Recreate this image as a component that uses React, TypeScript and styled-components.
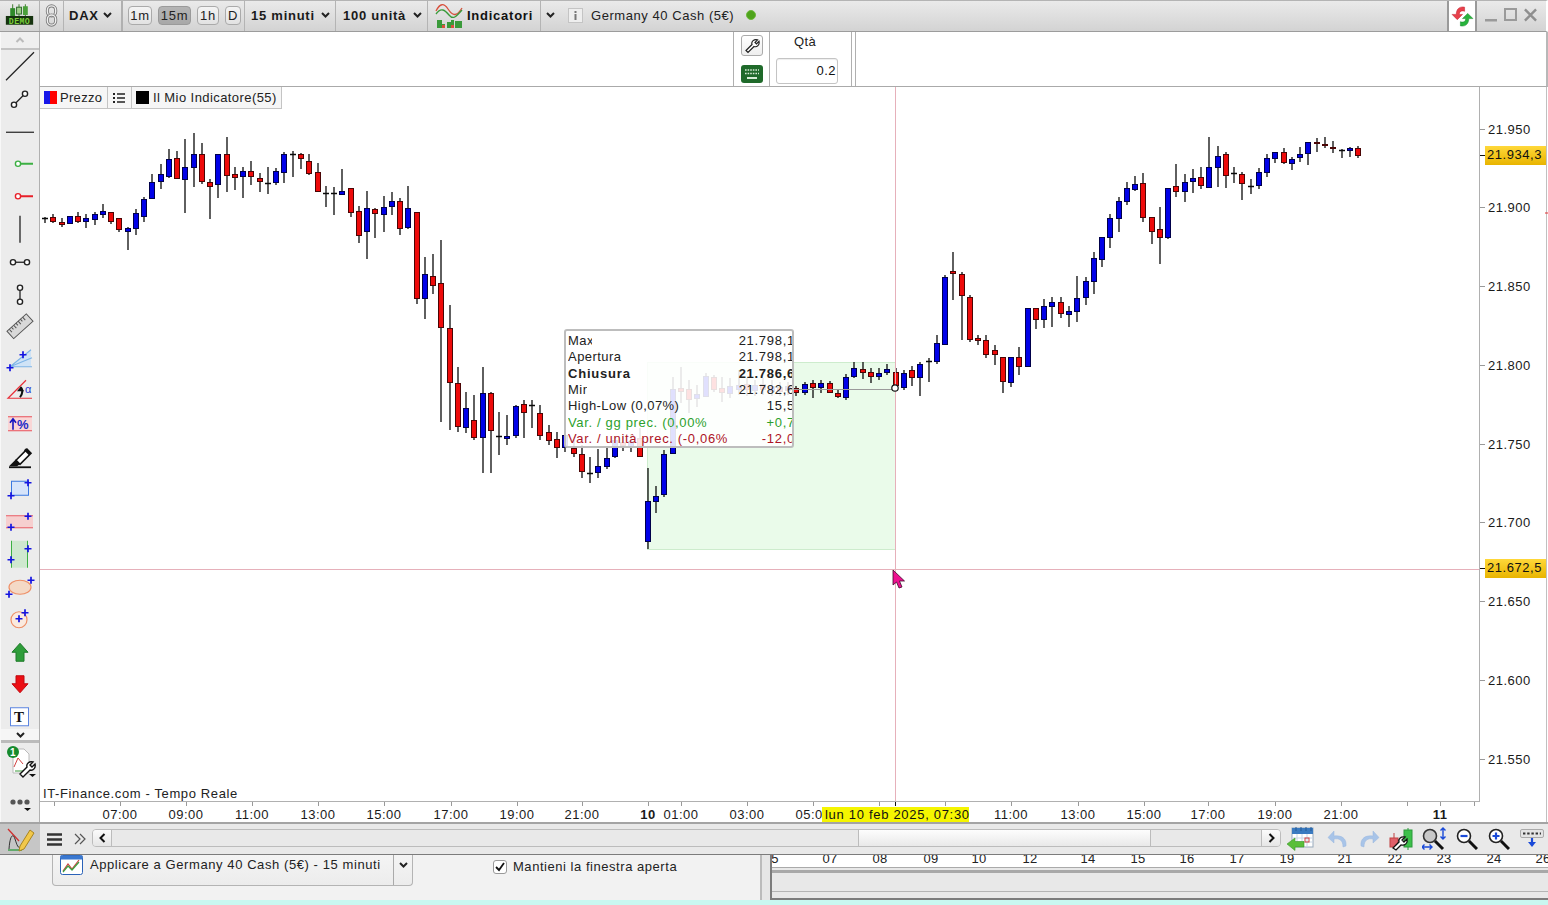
import React from "react";
import styled, { createGlobalStyle } from "styled-components";

const Global = createGlobalStyle`
  html, body { margin: 0; padding: 0; width: 1548px; height: 905px; overflow: hidden; background: #fff; }
  body { font-family: "Liberation Sans", Arial, sans-serif; font-size: 13px; color: #111; letter-spacing: .35px; }
  * { box-sizing: border-box; }
`;

const Page = styled.div`display:flex;flex-direction:column;width:1548px;height:905px;overflow:hidden;`;

/* ---------- top bar ---------- */
const TopBar = styled.div`
  display:flex;align-items:stretch;height:32px;flex:none;
  background:linear-gradient(#eaeaea,#d3d3d3);
  border-top:1px solid #b4b4b4;border-bottom:1px solid #9c9c9c;border-right:2px solid #fff;
`;
const Seg = styled.div<{ $w?: number; $heavy?: boolean; $plain?: boolean }>`
  display:flex;align-items:center;flex:none;height:100%;padding-bottom:2px;
  width:${p => (p.$w ? p.$w + "px" : "auto")};
  ${p => (p.$plain ? "justify-content:center;" : `border-right:${p.$heavy ? "2px solid #b0b0b0" : "1px solid #b4b4b4"};`)}
`;
const SegBold = styled(Seg)<{ $pl?: number; $pr?: number }>`
  justify-content:space-between;padding-left:${p => p.$pl ?? 6}px;padding-right:${p => p.$pr ?? 5}px;
  font-weight:700;letter-spacing:.75px;color:#1a1a1a;
`;
const PeriodSeg = styled(Seg)`gap:6px;padding-left:5px;`;
const Period = styled.div<{ $w: number; $on?: boolean }>`
  width:${p => p.$w}px;height:19px;display:flex;align-items:center;justify-content:center;
  border:1px solid ${p => (p.$on ? "#9a9a9a" : "#aaa")};border-radius:4px;
  background:${p => (p.$on ? "linear-gradient(#b4b4b4,#a8a8a8)" : "linear-gradient(#f4f4f4,#e2e2e2)")};
  color:#222;font-size:13px;letter-spacing:.8px;
`;
const IndicatorLabel = styled.span`font-weight:700;letter-spacing:.75px;`;
const InstrumentInfo = styled.div`display:flex;align-items:center;flex:1;padding:0 0 2px 8px;gap:8px;color:#222;letter-spacing:.55px;`;
const LiveDot = styled.span`width:10px;height:10px;border-radius:50%;background:#4fa41c;border:1px solid #6db83c;margin-left:4px;`;
const RefreshBox = styled.div`width:30px;height:100%;background:#fff;border:1px solid #9a9a9a;border-width:0 2px;display:flex;align-items:center;justify-content:center;flex:none;`;
const WinButtons = styled.div`display:flex;align-items:center;width:69px;flex:none;padding:0 0 2px 8px;gap:7px;`;

/* ---------- body ---------- */
const Body = styled.div`display:flex;height:790px;flex:none;`;
const Sidebar = styled.div`width:40px;flex:none;display:flex;flex-direction:column;background:#ececec;border-right:1px solid #b0b0b0;border-left:1px solid #f8f8f8;`;
const SideCap = styled.div`height:17.75px;flex:none;border-bottom:2px solid #c4c4c4;display:flex;align-items:center;justify-content:center;background:#efefef;`;
const ToolSlot = styled.div`height:32.5px;flex:none;margin-left:-1px;`;
const SideChevron = styled.div`height:14px;margin-top:-3px;flex:none;background:#f6f6f6;border-bottom:3px solid #bbb;display:flex;align-items:center;justify-content:center;position:relative;`;
const SideLower = styled.div`flex:1;display:flex;flex-direction:column;margin-left:-1px;`;
const LowerSlotA = styled.div`height:46px;flex:none;`;
const LowerSlotB = styled.div`flex:1;`;
const Main = styled.div`flex:1;display:flex;flex-direction:column;min-width:0;`;
const TradeStrip = styled.div`height:55px;flex:none;display:flex;padding-left:693px;background:#fff;border-bottom:1px solid #aaa;border-right:2px solid #b8b8b8;`;
const TradeTools = styled.div`width:36px;border-left:1px solid #b0b0b0;display:flex;flex-direction:column;align-items:center;padding-top:3px;gap:9px;position:relative;`;
const WrenchBtn = styled.div`width:22px;height:21px;border:1px solid #aaa;border-radius:3px;background:linear-gradient(#fff,#eee);display:flex;align-items:center;justify-content:center;`;
const QtySection = styled.div`width:83px;border-left:1px solid #b0b0b0;border-right:1px solid #b0b0b0;display:flex;flex-direction:column;align-items:flex-start;padding:2px 0 0 6px;`;
const QtyLabel = styled.div`width:58px;text-align:center;color:#222;height:24px;line-height:16px;`;
const QtyInput = styled.div`width:62px;height:26px;border:1px solid #c4c4c4;border-radius:3px;text-align:right;padding:4px 1px 0 0;background:#fff;box-shadow:inset 0 1px 1px #eee;letter-spacing:.5px;`;
const TradeEnd = styled.div`width:4px;border-right:1px solid #b0b0b0;`;

const ChartPanel = styled.div`position:relative;height:735px;flex:none;overflow:hidden;background:#fff;`;
const ChartSvg = styled.svg`display:block;`;
const Legend = styled.div`position:absolute;left:0;top:0;display:flex;height:22px;background:#f6f6f6;border-bottom:1px solid #c4c4c4;border-right:1px solid #c4c4c4;`;
const LegendItem = styled.div<{ $w: number; $gap?: number; $ls?: number }>`
  width:${p => p.$w}px;display:flex;align-items:center;gap:${p => p.$gap ?? 3}px;padding-left:4px;
  border-right:1px solid #c4c4c4;color:#222;letter-spacing:${p => p.$ls ?? 0.3}px;white-space:nowrap;
  &:last-child{border-right:0;}
`;
const Swatch = styled.span<{ $kind: "price" | "black" }>`
  width:13px;height:13px;flex:none;
  background:${p => (p.$kind === "price" ? "linear-gradient(90deg,#1515e8 50%,#f00 50%)" : "#000")};
`;
const Tooltip = styled.div`
  position:absolute;left:524px;top:242px;width:230px;height:119px;overflow:hidden;
  border:2px solid #bdbdbd;border-radius:3px;background:rgba(255,255,255,.88);padding:2px 0 0 2px;
`;
const TipRow = styled.div<{ $tone?: "green" | "red"; $bold?: boolean }>`
  display:flex;justify-content:space-between;height:16.35px;line-height:16.35px;white-space:nowrap;
  color:${p => (p.$tone === "green" ? "#2c9f2c" : p.$tone === "red" ? "#ad1426" : "#222")};
  font-weight:${p => (p.$bold ? 700 : 400)};
  letter-spacing:${p => (p.$bold ? ".8px" : p.$tone ? ".66px" : ".46px")};
`;
const TipLabel = styled.span<{ $clip?: number }>`display:block;overflow:hidden;${p => (p.$clip ? `width:${p.$clip}px;` : "")}`;
const TipValue = styled.span`margin-right:-3px;letter-spacing:.72px;`;
const PriceTag = styled.div<{ $top: number }>`
  position:absolute;left:1445px;top:${p => p.$top}px;width:61px;height:19px;line-height:18px;padding-left:2px;
  background:linear-gradient(#ffd83a,#e8b400);color:#111;letter-spacing:.55px;
`;
const TimeTag = styled.div`position:absolute;left:782px;top:720px;width:147px;height:16px;line-height:16px;background:#f5f500;color:#111;padding-left:3px;letter-spacing:.7px;white-space:nowrap;overflow:hidden;`;
const Feed = styled.div`position:absolute;left:3px;top:699px;color:#222;letter-spacing:.62px;`;
const Pointer = styled.svg`position:absolute;left:852px;top:482px;`;

/* ---------- bottom bar ---------- */
const BottomBar = styled.div`display:flex;align-items:stretch;height:33px;flex:none;background:#e9e9e9;border-top:2px solid #a4a4a4;border-bottom:1px solid #7c7c7c;`;
const PencilCell = styled.div`width:40px;flex:none;background:#c6c6c6;display:flex;align-items:center;justify-content:center;`;
const MenuCell = styled.div`width:52px;flex:none;display:flex;align-items:center;padding-left:7px;gap:12px;`;
const Scrollbar = styled.div`width:1189px;height:18px;margin-top:5px;flex:none;display:flex;border:1px solid #bcbcbc;border-radius:4px;background:#e9e9e9;overflow:hidden;`;
const ScrollBtn = styled.div`width:19px;flex:none;background:linear-gradient(#fbfbfb,#e6e6e6);display:flex;align-items:center;justify-content:center;`;
const ScrollBtnL = styled(ScrollBtn)`border-right:1px solid #bcbcbc;`;
const ScrollBtnR = styled(ScrollBtn)`border-left:1px solid #bcbcbc;margin-left:auto;`;
const Thumb = styled.div`width:293px;margin-left:746px;background:linear-gradient(#fdfdfd,#e9e9e9);border-left:1px solid #bcbcbc;border-right:1px solid #bcbcbc;`;
const ToolIcons = styled.div`flex:1;display:flex;align-items:center;padding-left:6px;`;
const BarIcon = styled.svg<{ $ml?: number; $flip?: boolean }>`
  flex:none;display:block;margin-left:${p => p.$ml ?? 0}px;
  ${p => (p.$flip ? "transform:scaleX(-1);" : "")}
`;

/* ---------- lower panel ---------- */
const Lower = styled.div`display:flex;height:45px;flex:none;background:#f2f2f2;`;
const ApplyPanel = styled.div`width:760px;flex:none;display:flex;align-items:flex-start;padding-left:52px;`;
const ApplyBtn = styled.div`width:361px;height:31px;flex:none;display:flex;background:linear-gradient(#f4f4f4,#ececec);border:1px solid #b4b4b4;border-top:0;border-radius:0 0 4px 4px;`;
const ApplyMain = styled.div`flex:1;display:flex;align-items:flex-start;padding:0 0 0 7px;gap:7px;line-height:20px;color:#222;letter-spacing:.58px;white-space:nowrap;`;
const ApplyDrop = styled.div`width:19px;border-left:1px solid #aaa;display:flex;justify-content:center;padding-top:7px;`;
const KeepOpen = styled.label`display:flex;align-items:center;gap:6px;margin:4px 0 0 80px;color:#222;letter-spacing:.54px;white-space:nowrap;`;
const CheckBox = styled.span`width:14px;height:14px;border:1px solid #999;border-radius:3px;background:#fff;display:flex;align-items:center;justify-content:center;`;
const Gutter = styled.div`width:10px;flex:none;background:#e6e6e6;border-left:2px solid #bbb;`;
const Overview = styled.div`flex:1;display:flex;flex-direction:column;background:#e8e8e8;border-left:2px solid #7c7c7c;border-bottom:2px solid #7c7c7c;overflow:hidden;`;
const OverviewDates = styled.div`height:13px;flex:none;background:#fff;border-bottom:1px solid #aaa;overflow:hidden;`;
const OverviewRule = styled.div`height:22px;flex:none;margin-top:2px;border-top:3px solid #a8a8a8;border-bottom:1px solid #b4b4b4;`;
const Teal = styled.div`height:5px;flex:none;background:#c9f7f0;`;

/* ---------- small icons ---------- */
const Chevron = ({ w = 9, c = "#222" }: { w?: number; c?: string }) => (
  <svg width={w} height={6} viewBox="0 0 9 6"><polyline points="1,1 4.5,4.5 8,1" fill="none" stroke={c} strokeWidth="2" /></svg>
);
const Cross = ({ x, y, c = "#1414e0" }: { x: number; y: number; c?: string }) => (
  <path d={`M${x - 3.5} ${y}H${x + 3.5}M${x} ${y - 3.5}V${y + 3.5}`} stroke={c} strokeWidth="1.7" fill="none" />
);
const Node = ({ x, y, c = "#222", w = 1.4 }: { x: number; y: number; c?: string; w?: number }) => (
  <circle cx={x} cy={y} r="2.6" fill="#fff" stroke={c} strokeWidth={w} />
);

const Tool = ({ cy, children }: { cy: number; children: React.ReactNode }) => (
  <ToolSlot>
    <svg width="40" height="32.5" viewBox={`0 ${cy - 16.25} 40 32.5`} style={{ display: "block", overflow: "visible" }}>{children}</svg>
  </ToolSlot>
);

const tools: React.ReactNode[] = [
  <path d="M6 80L34 52" stroke="#222" strokeWidth="1.2" />,
  <g><path d="M14 105L25 94" stroke="#222" strokeWidth="1.3" /><Node x={14} y={105} /><Node x={25} y={94} /></g>,
  <path d="M6 132H34" stroke="#222" strokeWidth="1.2" />,
  <g><path d="M18 164H33" stroke="#3cb043" strokeWidth="2" /><Node x={18} y={164} c="#3cb043" /></g>,
  <g><path d="M18 196H33" stroke="#e8202a" strokeWidth="2" /><Node x={18} y={196} c="#e8202a" /></g>,
  <path d="M20 216V243" stroke="#222" strokeWidth="1.3" />,
  <g><path d="M13 262H27" stroke="#222" strokeWidth="1.3" /><Node x={13} y={262} /><Node x={27} y={262} /></g>,
  <g><path d="M20 288V302" stroke="#222" strokeWidth="1.3" /><Node x={20} y={288} /><Node x={20} y={302} /></g>,
  <g transform="rotate(-42 20 326)"><rect x="7" y="321" width="26" height="10" fill="#d9d9d9" stroke="#555" />
    <path d="M10 321v4M13 321v3M16 321v4M19 321v3M22 321v4M25 321v3M28 321v4" stroke="#555" /></g>,
  <g><path d="M10 367L31 350V367Z" fill="#cfe3f6" /><path d="M10 367L31 350M10 367L32 358M10 367H32" stroke="#7db4e6" strokeWidth="1.1" /><Cross x={10} y={368} /><Cross x={23} y={355} /></g>,
  <g><path d="M26 380L8 398H32" fill="none" stroke="#e8303a" strokeWidth="1.2" /><path d="M20 397Q24 392 21 387" fill="none" stroke="#111" strokeWidth="2" /><path d="M17 391l4-5 3 5Z" fill="#111" /><text x="25" y="393" fontSize="11" fill="#2a3ad0" fontFamily="Liberation Sans">α</text></g>,
  <g><rect x="8" y="417" width="24" height="14" fill="#f9d6d6" /><path d="M8 417H32M8 431H32" stroke="#e8505a" /><path d="M13 430V420M10 423L13 419L16 423" stroke="#1414c0" strokeWidth="1.6" fill="none" /><text x="17" y="429" fontSize="13" fontWeight="700" fill="#1c2ac8" fontFamily="Liberation Sans">%</text></g>,
  <g><path d="M16 460L27 449L31 453L20 464Z" fill="#fff" stroke="#111" strokeWidth="1.6" /><path d="M9 466L16 459L20 464L17 466Z" fill="#111" /><path d="M9 467H31" stroke="#111" strokeWidth="1.8" /><path d="M25 449l5 5" stroke="#111" strokeWidth="3" /></g>,
  <g><rect x="11.5" y="481.5" width="17" height="14" fill="#d6e4fa" stroke="#3a78e0" /><Cross x={28} y={483} /><Cross x={11} y={496} /></g>,
  <g><rect x="6" y="515" width="27" height="13" fill="#f6cfcf" /><path d="M6 515.5H33M6 527.5H33" stroke="#e8606a" /><Cross x={28} y={516} /><Cross x={11} y={527} /></g>,
  <g><rect x="11" y="541" width="16" height="27" fill="#cfe8cf" /><path d="M11.5 541V568M27.5 541V568" stroke="#3cb043" /><Cross x={28} y={549} /><Cross x={11} y={560} /></g>,
  <g><ellipse cx="20" cy="587" rx="11" ry="7" fill="#f4d9c6" stroke="#ee8f66" strokeWidth="1.2" /><Cross x={31} y={580} /><Cross x={9} y={594} /></g>,
  <g><circle cx="19" cy="620" r="8" fill="#faeadf" stroke="#ee8f66" strokeWidth="1.2" /><Cross x={25} y={613} /><Cross x={19} y={619} /></g>,
  <path d="M20 643L28 652H24V661H16V652H12Z" fill="#2e9d3a" stroke="#1f7a2a" />,
  <path d="M20 693L28 684H24V676H16V684H12Z" fill="#ec0f14" stroke="#c00a10" />,
  <g><rect x="10.5" y="707.5" width="18" height="18" fill="#fff" stroke="#5b84e0" /><text x="14" y="722" fontSize="15" fontWeight="700" fontFamily="Liberation Serif" fill="#111">T</text></g>,
];

/* ---------- chart data: [high, bodyTop, bodyBottom, low, kind] ---------- */
type C = [number, number, number, number, "b" | "r" | "d"];
const candles: C[] = [
  [217,218,220,223,"d"],[214,217,222,223,"r"],[218,222,225,227,"r"],[216,216,224,224,"b"],[212,216,222,223,"r"],
  [214,218,222,228,"b"],[212,214,220,225,"b"],[204,211,215,218,"b"],[212,212,222,224,"r"],[218,218,230,232,"r"],
  [227,228,232,250,"b"],[209,213,229,235,"b"],[197,199,217,222,"b"],[174,182,199,199,"b"],[164,174,182,189,"b"],
  [149,159,177,178,"b"],[151,158,179,179,"r"],[139,167,180,213,"b"],[133,154,168,187,"b"],[143,154,182,184,"r"],
  [179,182,187,219,"r"],[154,154,185,198,"b"],[137,154,176,192,"r"],[167,174,178,190,"r"],[167,171,177,198,"b"],
  [161,171,177,185,"r"],[173,178,182,192,"r"],[167,183,184,194,"d"],[168,171,183,185,"b"],[152,154,173,183,"b"],
  [151,154,155,177,"d"],[153,154,159,169,"r"],[154,161,174,175,"r"],[163,172,192,192,"r"],[186,193,193,207,"d"],
  [187,193,193,215,"d"],[169,191,195,195,"b"],[188,188,213,217,"r"],[206,211,236,243,"r"],[191,208,232,259,"b"],
  [208,209,214,238,"r"],[196,207,215,232,"b"],[192,201,207,215,"b"],[198,201,229,235,"r"],[186,208,228,229,"b"],
  [212,212,299,304,"r"],[257,274,299,319,"b"],[254,276,286,294,"r"],[240,283,328,422,"r"],[305,328,383,430,"r"],
  [367,383,427,432,"r"],[392,408,428,433,"b"],[395,420,438,440,"r"],[367,393,438,473,"b"],[392,393,431,473,"r"],
  [412,436,437,455,"d"],[415,436,439,445,"b"],[405,406,436,438,"b"],[400,404,413,438,"r"],[400,405,408,428,"d"],
  [405,413,436,440,"r"],[425,432,441,445,"r"],[432,439,448,458,"r"],[425,435,448,452,"b"],[440,448,454,457,"r"],
  [445,454,472,478,"r"],[457,473,474,483,"d"],[449,466,473,478,"b"],[448,458,467,469,"b"],[436,440,457,458,"b"],
  [435,442,446,451,"r"],[434,441,447,452,"b"],[428,438,457,457,"r"],[468,501,542,549,"b"],[486,496,502,513,"b"],
  [450,454,495,497,"b"],[377,389,454,454,"b"],[367,388,392,403,"r"],[380,389,400,413,"r"],[385,394,399,407,"b"],
  [373,376,397,397,"b"],[375,377,390,392,"r"],[377,388,393,402,"r"],[378,386,394,398,"b"],[370,385,390,395,"b"],
  [378,384,390,396,"r"],[380,385,391,396,"b"],[378,384,390,395,"r"],[380,386,392,396,"b"],[382,387,392,396,"r"],
  [382,386,391,395,"b"],[386,388,393,396,"r"],[382,384,393,395,"b"],[380,383,388,398,"r"],[380,383,388,393,"b"],
  [381,383,393,393,"r"],[390,393,397,398,"r"],[374,377,398,400,"b"],[362,368,377,378,"b"],[362,369,373,379,"r"],
  [368,372,377,383,"r"],[368,373,377,380,"b"],[364,369,373,375,"b"],[368,372,386,390,"r"],[370,373,388,390,"b"],
  [366,370,378,386,"r"],[362,364,378,396,"b"],[358,361,362,382,"d"],[335,343,362,364,"b"],[275,277,345,345,"b"],
  [252,271,274,300,"r"],[272,274,296,340,"r"],[295,297,340,342,"r"],[335,338,341,345,"r"],[335,340,355,358,"r"],
  [345,350,355,365,"r"],[357,357,382,393,"r"],[357,357,383,387,"b"],[347,357,367,375,"r"],[308,308,367,367,"b"],
  [308,308,320,329,"r"],[299,306,320,328,"b"],[297,302,307,327,"b"],[297,302,314,318,"r"],[306,311,315,327,"b"],
  [276,298,312,322,"b"],[277,281,298,305,"b"],[252,258,282,294,"b"],[237,237,260,267,"b"],[214,218,238,248,"b"],
  [197,201,219,232,"b"],[182,188,202,205,"b"],[176,184,190,191,"b"],[173,183,218,222,"r"],[217,217,232,244,"r"],
  [207,229,238,264,"r"],[188,188,238,239,"b"],[164,186,192,197,"r"],[174,182,192,202,"b"],[169,178,182,193,"b"],
  [167,177,186,189,"r"],[137,167,188,188,"b"],[146,156,168,187,"b"],[152,154,176,188,"r"],[167,173,173,183,"d"],
  [172,174,184,200,"r"],[179,186,186,194,"d"],[168,172,186,189,"b"],[154,158,173,177,"b"],[152,152,159,163,"b"],
  [148,152,163,164,"r"],[157,159,164,170,"b"],[147,154,158,162,"b"],[142,142,154,165,"b"],[138,142,143,152,"r"],
  [137,144,146,148,"r"],[141,147,149,153,"r"],[149,150,150,158,"d"],[147,148,151,157,"b"],[146,148,156,158,"r"],
];

const priceTicks: [string, number][] = [["21.950",129],["21.900",207],["21.850",286],["21.800",365],["21.750",444],["21.700",522],["21.650",601],["21.600",680],["21.550",759]];
const timeTicks: [string, number, boolean?][] = [["07:00",120],["09:00",186],["11:00",252],["13:00",318],["15:00",384],["17:00",451],["19:00",517],["21:00",582],["10",648,true],["01:00",681],["03:00",747],["05:00",813],["11:00",1011],["13:00",1078],["15:00",1144],["17:00",1208],["19:00",1275],["21:00",1341],["11",1440,true]];
const extraTicks = [54, 879, 945, 1407, 1474];
const overviewDates: [string, number][] = [["5",775],["07",830],["08",880],["09",931],["10",979],["12",1030],["14",1088],["15",1138],["16",1187],["17",1237],["19",1287],["21",1345],["22",1395],["23",1444],["24",1494],["26",1543]];

const Candle = ({ c, i }: { c: C; i: number }) => {
  const x = Math.round(45 + i * 8.258);
  const [hi, top, bot, lo, k] = c;
  return (
    <g>
      <line x1={x} x2={x} y1={hi} y2={lo} stroke="#0a0a0a" strokeWidth="1.3" />
      {k === "d" ? (
        <line x1={x - 3} x2={x + 3} y1={top + 0.5} y2={top + 0.5} stroke="#0a0a0a" strokeWidth="1.5" />
      ) : (
        <rect x={x - 2.5} y={top + 0.5} width={5} height={Math.max(bot - top - 1, 1)} fill={k === "b" ? "#0000e8" : "#ee0a0a"} stroke={k === "b" ? "#00004a" : "#4a0505"} strokeWidth="1" />
      )}
    </g>
  );
};

const Chart = () => (
  <ChartSvg width="1508" height="735" viewBox="40 87 1508 735">
    <rect x="647.5" y="362.5" width="248" height="187" fill="#eafbea" stroke="#cdeccd" />
    {candles.map((c, i) => <Candle key={i} c={c} i={i} />)}
    <path d="M793 389.5H895" stroke="#9a9a9a" />
    <rect x="895" y="87" width="1" height="714" fill="#e6b0ba" />
    <rect x="40" y="569" width="1440" height="1" fill="#e6b0ba" />
    <circle cx="895" cy="388" r="3.2" fill="#fff" stroke="#111" strokeWidth="1.2" />
    <path d="M1479.5 87V801M40 801.5H1480" stroke="#b0b0b0" />
    <path d="M1546.5 87V822" stroke="#c0c0c0" />
    <path d="M1545 213h3" stroke="#e03030" />
    <g fontFamily="Liberation Sans" fontSize="13" letterSpacing=".5" fill="#1a1a1a">
      {priceTicks.map(([t, y]) => (
        <g key={t}>
          <path d={`M1480 ${y + .5}h5`} stroke="#999" />
          <text x="1488" y={y + 5}>{t}</text>
        </g>
      ))}
      <path d="M1480 155.5h5M1480 568.5h5" stroke="#111" />
      {timeTicks.map(([t, x, b], i) => (
        <g key={i}>
          <path d={`M${x + .5} 802v4`} stroke="#999" />
          <text x={x} y="819" textAnchor="middle" fontWeight={b ? 700 : 400}>{t}</text>
        </g>
      ))}
      {extraTicks.map(x => <path key={x} d={`M${x + .5} 802v4`} stroke="#999" />)}
      <path d="M895.5 802v4" stroke="#111" />
    </g>
  </ChartSvg>
);

const Wrench = () => (
  <path d="M2 12.5L8 6.5C7 3.5 10 .8 13.5 1.8L11 4.5 12.5 6 15 3.3C15.8 7 13 9.5 10 8.5L4 14.5Z" fill="#fff" stroke="#222" strokeWidth="1.2" />
);

const App = () => (
  <Page>
    <Global />
    <TopBar>
      <Seg $w={40}>
        <svg width="40" height="28" viewBox="0 2 40 28">
          <path d="M13 5v12M19.5 5v12M26 5v12" stroke="#3d7a2a" />
          <rect x="10.5" y="9" width="5" height="8" fill="#2f8a2a" />
          <rect x="17" y="8" width="5" height="7" fill="#9fd08a" stroke="#2f6a2a" />
          <rect x="23.5" y="7" width="5" height="9" fill="#4aa03a" />
          <rect x="6" y="17" width="28" height="9" fill="#16330f" />
          <text x="20" y="25" textAnchor="middle" fontSize="8.5" fontWeight="700" fill="#7ccf3c" fontFamily="Liberation Mono" letterSpacing=".4">DEMO</text>
        </svg>
      </Seg>
      <Seg $w={24}>
        <svg width="24" height="26" viewBox="0 0 24 26" style={{ marginLeft: 1 }}>
          <g fill="none">
            <rect x="7" y="3" width="9" height="11" rx="4.5" stroke="#7c7c7c" strokeWidth="3.4" />
            <rect x="7" y="3" width="9" height="11" rx="4.5" stroke="#efefef" strokeWidth="1.5" />
            <rect x="7" y="13" width="9" height="11" rx="4.5" stroke="#7c7c7c" strokeWidth="3.4" />
            <rect x="7" y="13" width="9" height="11" rx="4.5" stroke="#efefef" strokeWidth="1.5" />
          </g>
        </svg>
      </Seg>
      <SegBold $w={59} $heavy $pl={5} $pr={9}>DAX<Chevron /></SegBold>
      <PeriodSeg $w={122}>
        <Period $w={24}>1m</Period>
        <Period $w={33} $on>15m</Period>
        <Period $w={22}>1h</Period>
        <Period $w={16}>D</Period>
      </PeriodSeg>
      <SegBold $w={91}>15 minuti<Chevron /></SegBold>
      <SegBold $w={92} $pl={7}>100 unità<Chevron /></SegBold>
      <Seg $w={113}>
        <svg width="39" height="30" viewBox="0 0 39 30" style={{ flex: "none" }}>
          <path d="M8 11C12 3 16 3 20 9S28 18 34 8" fill="none" stroke="#d8503c" strokeWidth="1.3" />
          <path d="M8 14C13 7 17 10 21 15S28 17 34 10" fill="none" stroke="#3a9a3a" strokeWidth="1.3" />
          <path d="M9 28v-8h5v4h3v4zM19 28v-6h4v-2h3v8zM27 28v-7h7v7z" fill="#3a9a3a" />
          <path d="M14 28v-3h3v3zM23 28v-3h3v3z" fill="#d8503c" />
        </svg>
        <IndicatorLabel>Indicatori</IndicatorLabel>
      </Seg>
      <Seg $w={19} $plain><Chevron /></Seg>
      <InstrumentInfo>
        <svg width="15" height="15" viewBox="0 0 15 15"><rect x=".5" y=".5" width="14" height="14" fill="#eee" stroke="#c4c4c4" /><rect x="6.5" y="3" width="2" height="2" fill="#777" /><rect x="6.5" y="6" width="2" height="6" fill="#777" /></svg>
        <span>Germany 40 Cash (5€)</span>
        <LiveDot />
      </InstrumentInfo>
      <RefreshBox>
        <svg width="25" height="25" viewBox="0 0 24 24">
          <path d="M14 3C8 2 6 6 6 10H2l5 5 5-5H9c0-3 2-4 5-3z" fill="#e8404a" stroke="#c02030" strokeWidth=".5" />
          <path d="M10 21c6 1 8-3 8-7h4l-5-5-5 5h3c0 3-2 4-5 3z" fill="#28b43c" stroke="#188a2a" strokeWidth=".5" />
        </svg>
      </RefreshBox>
      <WinButtons>
        <svg width="12" height="14" viewBox="0 0 12 14"><rect y="11" width="12" height="2.5" fill="#9a9a9a" /></svg>
        <svg width="13" height="14" viewBox="0 0 13 14"><rect x="1" y="1" width="11" height="11" fill="none" stroke="#9a9a9a" strokeWidth="2" /></svg>
        <svg width="13" height="14" viewBox="0 0 14 14"><path d="M1 1L13 13M13 1L1 13" stroke="#8e8e8e" strokeWidth="2.6" /></svg>
      </WinButtons>
    </TopBar>

    <Body>
      <Sidebar>
        <SideCap><svg width="10" height="6" viewBox="0 0 9 6"><polyline points="1,5 4.5,1.5 8,5" fill="none" stroke="#bbb" strokeWidth="2" /></svg></SideCap>
        {tools.map((t, i) => <Tool key={i} cy={66 + 32.5 * i}>{t}</Tool>)}
        <SideChevron><Chevron /></SideChevron>
        <SideLower>
          <LowerSlotA>
            <svg width="40" height="46" viewBox="0 745 40 46" style={{ display: "block" }}>
              <path d="M13 751h11l5 5v19H13z" fill="#fff" stroke="#bbb" />
              <path d="M14 769l4-9 5 6" fill="none" stroke="#d04040" />
              <path d="M15 773h8" stroke="#3a9a3a" />
              <path d="M20 776l7-7c-1-3 2-6 6-5l-3 3 2 2 3-3c1 4-2 7-5 6l-7 7z" fill="#fff" stroke="#111" strokeWidth="1.4" />
              <path d="M29 776h7l-3.5 3z" fill="#111" />
              <circle cx="13" cy="754" r="6" fill="#158a2e" />
              <text x="13" y="758" fontSize="10" fontWeight="700" textAnchor="middle" fill="#fff" fontFamily="Liberation Sans">1</text>
            </svg>
          </LowerSlotA>
          <LowerSlotB>
            <svg width="40" height="31" viewBox="0 791 40 31" style={{ display: "block" }}>
              <circle cx="13" cy="804" r="2.6" fill="#555" /><circle cx="20" cy="804" r="2.6" fill="#555" /><circle cx="27" cy="804" r="2.6" fill="#555" />
              <path d="M24 810h7l-3.5 3z" fill="#111" />
            </svg>
          </LowerSlotB>
        </SideLower>
      </Sidebar>
      <Main>
        <TradeStrip>
          <TradeTools>
            <WrenchBtn>
              <svg width="16" height="16" viewBox="0 0 16 16"><Wrench /></svg>
            </WrenchBtn>
            <svg width="22" height="18" viewBox="0 0 22 18">
              <rect width="22" height="18" rx="3" fill="#1f6a2a" />
              <path d="M4 5h14M4 8.5h14" stroke="#d6ecd6" strokeWidth="1.6" strokeDasharray="1.6 1" />
              <rect x="6" y="12" width="10" height="2" fill="#d6ecd6" />
            </svg>
          </TradeTools>
          <QtySection>
            <QtyLabel>Qtà</QtyLabel>
            <QtyInput>0.2</QtyInput>
          </QtySection>
          <TradeEnd />
        </TradeStrip>
        <ChartPanel>
          <Chart />
          <Legend>
            <LegendItem $w={68}><Swatch $kind="price" />Prezzo</LegendItem>
            <LegendItem $w={24}>
              <svg width="14" height="12" viewBox="0 0 14 12"><path d="M5 2h8M5 6h8M5 10h8" stroke="#222" strokeWidth="1.6" /><path d="M1 2h2M1 6h2M1 10h2" stroke="#222" strokeWidth="2.2" /></svg>
            </LegendItem>
            <LegendItem $w={149} $gap={4} $ls={0.42}><Swatch $kind="black" />Il Mio Indicatore(55)</LegendItem>
          </Legend>
          <Tooltip>
            <TipRow><TipLabel $clip={24}>Max</TipLabel><TipValue>21.798,1</TipValue></TipRow>
            <TipRow><TipLabel>Apertura</TipLabel><TipValue>21.798,1</TipValue></TipRow>
            <TipRow $bold><TipLabel>Chiusura</TipLabel><TipValue>21.786,6</TipValue></TipRow>
            <TipRow><TipLabel $clip={19}>Min</TipLabel><TipValue>21.782,6</TipValue></TipRow>
            <TipRow><TipLabel>High-Low (0,07%)</TipLabel><TipValue>15,5</TipValue></TipRow>
            <TipRow $tone="green"><TipLabel>Var. / gg prec. (0,00%</TipLabel><TipValue>+0,7</TipValue></TipRow>
            <TipRow $tone="red"><TipLabel>Var. / unità prec. (-0,06%</TipLabel><TipValue>-12,0</TipValue></TipRow>
          </Tooltip>
          <PriceTag $top={59}>21.934,3</PriceTag>
          <PriceTag $top={472}>21.672,5</PriceTag>
          <TimeTag>lun 10 feb 2025, 07:30</TimeTag>
          <Feed>IT-Finance.com - Tempo Reale</Feed>
          <Pointer width="14" height="20" viewBox="0 0 14 20">
            <path d="M1 1L1 16L4.5 13L7 19L10 18L7.5 12L12.5 12Z" fill="#ee1090" stroke="#3a0a2a" strokeWidth=".8" />
          </Pointer>
        </ChartPanel>
      </Main>
    </Body>

    <BottomBar>
      <PencilCell>
        <svg width="30" height="28" viewBox="0 0 30 28">
          <path d="M3 4L14 16" stroke="#d03030" strokeWidth="1.3" />
          <path d="M4 24C5 10 8 8 10 14S13 24 16 22" fill="none" stroke="#333" />
          <path d="M3 25H17" stroke="#2a9a3a" strokeWidth="1.3" />
          <path d="M15 21L25 5L29 8L19 24L14 26Z" fill="#f2c84a" stroke="#a88420" />
        </svg>
      </PencilCell>
      <MenuCell>
        <svg width="15" height="13" viewBox="0 0 15 13"><path d="M0 1.5h15M0 6.5h15M0 11.5h15" stroke="#333" strokeWidth="2.4" /></svg>
        <svg width="12" height="12" viewBox="0 0 12 12"><path d="M1 1l5 5-5 5M6 1l5 5-5 5" fill="none" stroke="#555" strokeWidth="1.2" /></svg>
      </MenuCell>
      <Scrollbar>
        <ScrollBtnL><svg width="7" height="10" viewBox="0 0 7 10"><polyline points="5.5,1 1.5,5 5.5,9" fill="none" stroke="#111" strokeWidth="2" /></svg></ScrollBtnL>
        <Thumb />
        <ScrollBtnR><svg width="7" height="10" viewBox="0 0 7 10"><polyline points="1.5,1 5.5,5 1.5,9" fill="none" stroke="#111" strokeWidth="2" /></svg></ScrollBtnR>
      </Scrollbar>
      <ToolIcons>
        <BarIcon width="27" height="26" viewBox="0 0 27 26">
          <rect x="5" y="2" width="21" height="19" fill="#fff" stroke="#9ab" />
          <rect x="5" y="2" width="21" height="6" fill="#3a7ac0" />
          <path d="M9 1v4M14 1v4M19 1v4M24 1v4" stroke="#245a96" />
          <path d="M5 12h21M5 16h21M10 8v13M15 8v13M20 8v13" stroke="#c8d4e4" />
          <rect x="18" y="12" width="4" height="4" fill="none" stroke="#d04040" />
          <path d="M0 18L8 12V15.5H17V21H8V24.5Z" fill="#5abe3a" stroke="#3a9a2a" strokeWidth=".6" />
        </BarIcon>
        <BarIcon $ml={12} width="23" height="22" viewBox="0 0 23 22">
          <path d="M20 18C21 10 15 7 8 8V3L2 9.5 8 15V11C13 10 17 12 17 19Z" fill="#a8c4e8" stroke="#98b6de" strokeWidth=".5" />
        </BarIcon>
        <BarIcon $ml={9} $flip width="23" height="22" viewBox="0 0 23 22">
          <path d="M20 18C21 10 15 7 8 8V3L2 9.5 8 15V11C13 10 17 12 17 19Z" fill="#a8c4e8" stroke="#98b6de" strokeWidth=".5" />
        </BarIcon>
        <BarIcon $ml={8} width="24" height="24" viewBox="0 0 24 24">
          <path d="M19 1v22" stroke="#2a9a3a" />
          <rect x="15" y="3" width="8" height="17" fill="#3cc04a" stroke="#2a9a3a" />
          <path d="M5 6v16" stroke="#c04040" />
          <rect x="1" y="11" width="8" height="9" fill="#e0606a" stroke="#c04040" />
          <path d="M4 21l6-6c-1-3 2-6 6-5l-3 3 2 2 3-3c1 4-2 7-6 6l-5 5z" fill="#fff" stroke="#111" strokeWidth="1.3" />
        </BarIcon>
        <BarIcon $ml={9} width="24" height="24" viewBox="0 0 24 24">
          <circle cx="8" cy="9" r="6.5" fill="#c8c8c8" stroke="#333" strokeWidth="1.6" />
          <path d="M13 14l8 8" stroke="#111" strokeWidth="3" />
          <path d="M21 1v11M18.5 3.5L21 1l2.5 2.5M18.5 9.5L21 12l2.5-2.5" fill="none" stroke="#1a4ad8" strokeWidth="1.4" />
          <path d="M0 20h10M2.5 17.5L0 20l2.5 2.5M7.5 17.5L10 20l-2.5 2.5" fill="none" stroke="#1a4ad8" strokeWidth="1.4" />
        </BarIcon>
        <BarIcon $ml={10} width="22" height="22" viewBox="0 0 22 22">
          <circle cx="8" cy="8" r="6.5" fill="#fff" stroke="#222" strokeWidth="1.6" />
          <path d="M13 13l8 8" stroke="#111" strokeWidth="3" />
          <path d="M4.5 8h7" stroke="#1a4ad8" strokeWidth="2.2" />
        </BarIcon>
        <BarIcon $ml={10} width="22" height="22" viewBox="0 0 22 22">
          <circle cx="8" cy="8" r="6.5" fill="#fff" stroke="#222" strokeWidth="1.6" />
          <path d="M13 13l8 8" stroke="#111" strokeWidth="3" />
          <path d="M4.5 8h7M8 4.5v7" stroke="#1a4ad8" strokeWidth="2.2" />
        </BarIcon>
        <BarIcon $ml={10} width="24" height="22" viewBox="0 0 24 22">
          <rect x=".5" y="1.5" width="23" height="8" rx="1.5" fill="#e4e4e4" stroke="#aaa" />
          <path d="M3 5.5h18" stroke="#333" strokeWidth="2" strokeDasharray="2.4 1.8" />
          <path d="M12 10v5" stroke="#1a4ad8" strokeWidth="2.2" />
          <path d="M8 14h8l-4 5z" fill="#1a4ad8" />
        </BarIcon>
      </ToolIcons>
    </BottomBar>

    <Lower>
      <ApplyPanel>
        <ApplyBtn>
          <ApplyMain>
            <svg width="23" height="20" viewBox="0 0 23 20" style={{ flex: "none" }}>
              <rect x=".5" y=".5" width="22" height="19" rx="2" fill="#fff" stroke="#2a62b8" />
              <rect x=".5" y=".5" width="22" height="4" fill="#3a78d0" />
              <path d="M3 16L8 9l4 5 7-9" fill="none" stroke="#d04040" strokeWidth="1.2" />
              <path d="M3 17L8 11l4 4 7-8" fill="none" stroke="#3aa040" strokeWidth="1.2" />
            </svg>
            <span>Applicare a Germany 40 Cash (5€) - 15 minuti</span>
          </ApplyMain>
          <ApplyDrop><Chevron /></ApplyDrop>
        </ApplyBtn>
        <KeepOpen>
          <CheckBox><svg width="10" height="10" viewBox="0 0 10 10"><path d="M1 5l3 3 5-7" fill="none" stroke="#111" strokeWidth="1.8" /></svg></CheckBox>
          Mantieni la finestra aperta
        </KeepOpen>
      </ApplyPanel>
      <Gutter />
      <Overview>
        <OverviewDates>
          <svg width="776" height="13" viewBox="772 855 776 13" style={{ display: "block" }}>
            {overviewDates.map(([t, x]) => (
              <text key={x} x={x} y="863" textAnchor="middle" fontSize="13" fontFamily="Liberation Sans" fill="#222">{t}</text>
            ))}
          </svg>
        </OverviewDates>
        <OverviewRule />
      </Overview>
    </Lower>
    <Teal />
  </Page>
);

export default App;
